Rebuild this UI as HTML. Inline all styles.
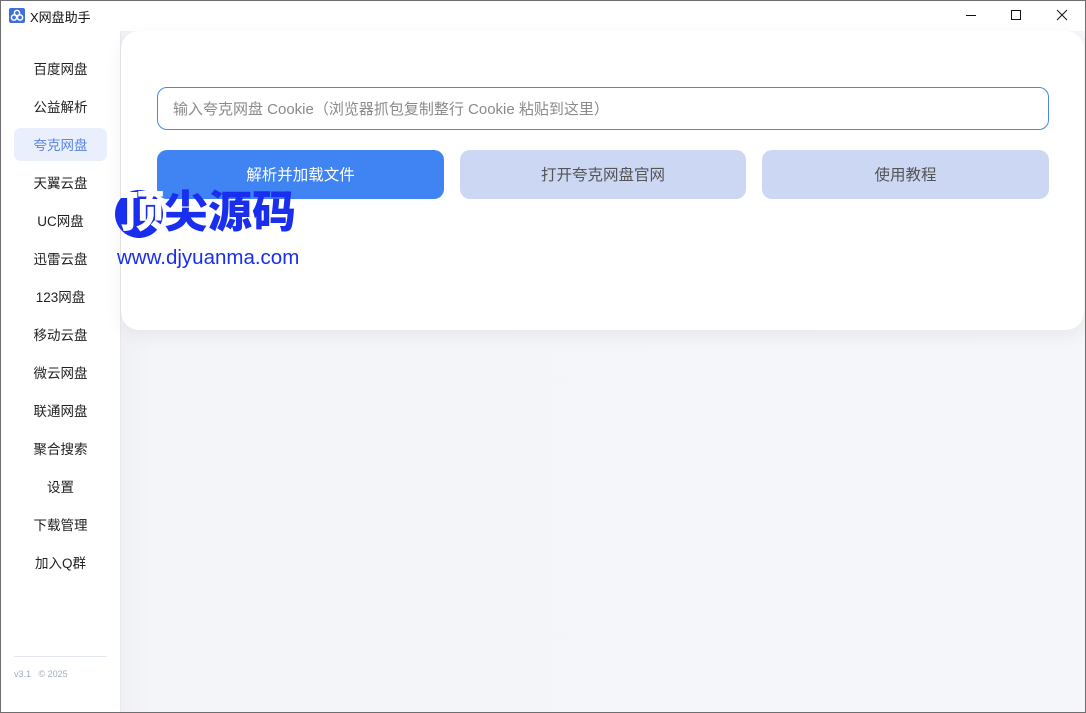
<!DOCTYPE html>
<html><head><meta charset="utf-8"><style>
*{margin:0;padding:0;box-sizing:border-box}
body{width:1086px;height:713px;overflow:hidden;font-family:"Liberation Sans","Noto Sans CJK SC",sans-serif;background:#fff;position:relative}
.win{position:absolute;inset:0;border:1px solid #6e6e6e}
.title{position:absolute;left:0;top:0;width:1086px;height:31px;background:#fff}
.title .t{position:absolute;left:30px;top:7px;font-size:13px;color:#111}
.logo{position:absolute;left:9px;top:8px;width:16px;height:15px;background:#3f6fd8;border-radius:2px}
.side{position:absolute;left:1px;top:31px;width:119px;height:681px;background:#fff}
.item{position:absolute;left:13px;width:93px;height:33px;border-radius:7px;font-size:13.5px;color:#222;text-align:center;line-height:35px}
.item.act{background:#e9effc;color:#5b86e0}
.main{position:absolute;left:120px;top:31px;width:965px;height:681px;background:linear-gradient(90deg,#f0f1f5,#f4f5f8 30px,#f5f6fa);border-left:1px solid #e6e8ee}
.card{position:absolute;left:121px;top:31px;width:963px;height:299px;background:#fff;border-radius:18px;box-shadow:0 6px 18px rgba(0,0,0,.06)}
.inp{position:absolute;left:157px;top:87px;width:892px;height:43px;border:1px solid #4d86ea;border-radius:10px;font-size:15px;color:#8a8a8a;line-height:43px;padding-left:15px}
.btn{position:absolute;top:150px;height:49px;border-radius:10px;font-size:15.5px;text-align:center;line-height:52px}
.ver{position:absolute;left:14px;top:669px;font-size:9px;color:#a5acc0}
</style></head><body>
<div class="title"><div class="logo"><svg width="16" height="15" viewBox="0 0 16 15"><circle cx="8" cy="5" r="2.6" fill="none" stroke="#fff" stroke-width="1.5"/><circle cx="5" cy="9.5" r="2.6" fill="none" stroke="#fff" stroke-width="1.5"/><circle cx="11" cy="9.5" r="2.6" fill="none" stroke="#fff" stroke-width="1.5"/></svg></div><div class="t">X网盘助手</div>
<div style="position:absolute;left:966px;top:15px;width:10px;height:1px;background:#111"></div>
<div style="position:absolute;left:1011px;top:10px;width:10px;height:10px;border:1px solid #111"></div>
<svg style="position:absolute;left:1056px;top:9px" width="12" height="12"><path d="M1 1L11 11M11 1L1 11" stroke="#111" stroke-width="1"/></svg>
</div>
<div class="side">
<div class="item" style="top:21px">百度网盘</div>
<div class="item" style="top:59px">公益解析</div>
<div class="item act" style="top:97px">夸克网盘</div>
<div class="item" style="top:135px">天翼云盘</div>
<div class="item" style="top:173px">UC网盘</div>
<div class="item" style="top:211px">迅雷云盘</div>
<div class="item" style="top:249px">123网盘</div>
<div class="item" style="top:287px">移动云盘</div>
<div class="item" style="top:325px">微云网盘</div>
<div class="item" style="top:363px">联通网盘</div>
<div class="item" style="top:401px">聚合搜索</div>
<div class="item" style="top:439px">设置</div>
<div class="item" style="top:477px">下载管理</div>
<div class="item" style="top:515px">加入Q群</div>
<div style="position:absolute;left:13px;top:625px;width:93px;height:1px;background:#e3e7ef"></div>
</div>
<div class="ver">v3.1 &nbsp; © 2025</div>
<div class="main"></div>
<div class="card"></div>
<div class="inp">输入夸克网盘 Cookie（浏览器抓包复制整行 Cookie 粘贴到这里）</div>
<div class="btn" style="left:157px;width:287px;background:#3f84f2;color:#fff">解析并加载文件</div>
<div class="btn" style="left:460px;width:286px;background:#ccd7f4;color:#555">打开夸克网盘官网</div>
<div class="btn" style="left:762px;width:287px;background:#ccd7f4;color:#555">使用教程</div>
<div style="position:absolute;left:115px;top:190px;width:48px;height:48px;border-radius:50%;background:#1a2ef0"></div>
<div style="position:absolute;left:120px;top:188px;font-size:44px;font-weight:900;color:#1a2ef0;letter-spacing:0px;line-height:50px"><span style="color:#fff">顶</span>尖源码</div>
<div style="position:absolute;left:117px;top:246px;font-size:20.5px;color:#1a2ef0">www.djyuanma.com</div>
<div class="win"></div>
</body></html>
